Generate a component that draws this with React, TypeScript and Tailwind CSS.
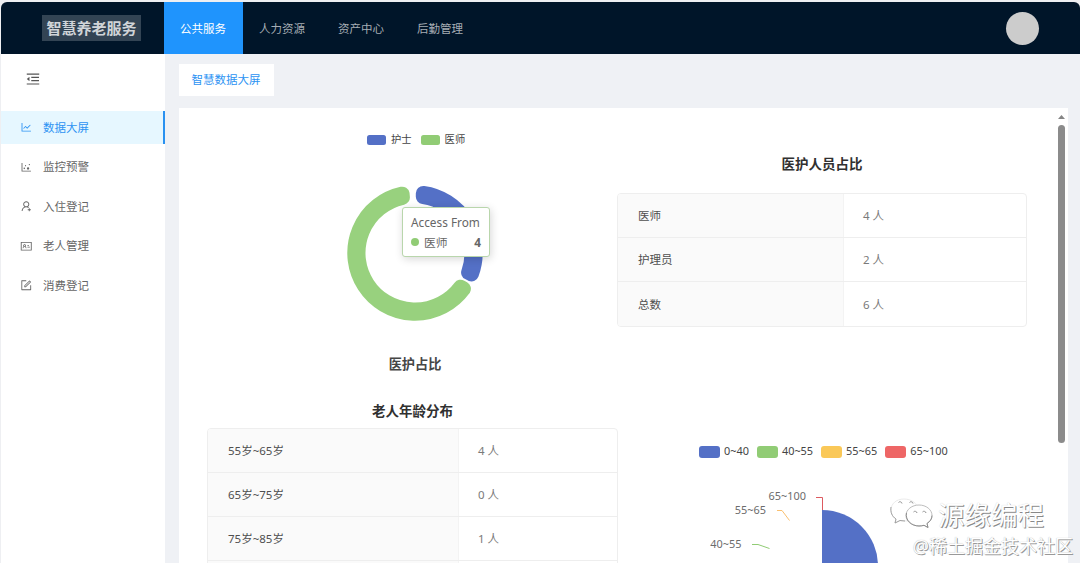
import React from 'react';
import {
  AiOutlineMenuFold,
  AiOutlineLineChart,
  AiOutlineDotChart,
  AiOutlineUserAdd,
  AiOutlineIdcard,
  AiOutlineForm,
} from 'react-icons/ai';

const navItems = ['公共服务', '人力资源', '资产中心', '后勤管理'];

const menuItems = [
  { label: '数据大屏', icon: AiOutlineLineChart },
  { label: '监控预警', icon: AiOutlineDotChart },
  { label: '入住登记', icon: AiOutlineUserAdd },
  { label: '老人管理', icon: AiOutlineIdcard },
  { label: '消费登记', icon: AiOutlineForm },
];

const staffRows = [
  ['医师', '4 人'],
  ['护理员', '2 人'],
  ['总数', '6 人'],
];

const ageRows = [
  ['55岁~65岁', '4 人'],
  ['65岁~75岁', '0 人'],
  ['75岁~85岁', '1 人'],
  ['', ''],
];

// ring segment inset by r, the round-joined stroke gives it back with rounded corners
const ringPath = (from: number, to: number, r = 7.5) => {
  const outer = 67.7 - r;
  const inner = 49.5 + r;
  const point = (radius: number, deg: number, side: number) => {
    const a = (deg * Math.PI) / 180 + side * Math.asin(r / radius);
    return `${(radius * Math.sin(a)).toFixed(2)} ${(-radius * Math.cos(a)).toFixed(2)}`;
  };
  const large = to - from > 190 ? 1 : 0;
  return `M${point(outer, from, 1)}A${outer} ${outer} 0 ${large} 1 ${point(outer, to, -1)}L${point(inner, to, -1)}A${inner} ${inner} 0 ${large} 0 ${point(inner, from, 1)}Z`;
};

const Header: React.FC = () => (
  <header className="flex h-[52px] shrink-0 items-stretch rounded-t-[6px] bg-[#001529]">
    <div className="flex w-[163px] shrink-0 items-center pl-[41px]">
      <div className="flex h-[26px] w-[99px] items-center justify-center bg-[#334454] text-[15px] font-bold text-[#d0d4d8]">
        智慧养老服务
      </div>
    </div>
    <nav className="flex text-[11.5px]">
      {navItems.map((item, i) => (
        <a
          key={item}
          className={`flex w-[79px] items-center justify-center pr-px pt-[2px] ${i === 0 ? 'bg-[#1f94fd] text-white' : 'text-[#a6adb4]'}`}
        >
          {item}
        </a>
      ))}
    </nav>
    <div className="ml-auto mr-[41px] flex items-center">
      <div className="h-[33px] w-[33px] rounded-full bg-[#ccc]" />
    </div>
  </header>
);

const Sidebar: React.FC = () => (
  <aside className="w-[164px] shrink-0 bg-white">
    <div className="flex h-[57px] items-center pb-[7px] pl-[24px] text-[#555]">
      <AiOutlineMenuFold size={16} />
    </div>
    <ul className="flex flex-col gap-[6.5px] text-[11.5px]">
      {menuItems.map(({ label, icon: Icon }, i) => (
        <li
          key={label}
          className={`flex h-[33px] items-center pl-[19px] ${i === 0 ? 'border-r-[2.5px] border-[#2a91f0] bg-[#e6f7ff] text-[#2d93f3]' : 'text-[#666]'}`}
        >
          <Icon size={12.5} />
          <span className="ml-[10.5px]">{label}</span>
        </li>
      ))}
    </ul>
  </aside>
);

const InfoTable: React.FC<{ rows: string[][]; labelWidth: string }> = ({ rows, labelWidth }) => (
  <div className="overflow-hidden rounded-[4px] border border-[#eeeeee] text-[11.5px]">
    {rows.map(([label, value], i) => (
      <div key={i} className="flex h-[44px] border-b border-[#eeeeee] last:border-b-0">
        <div className={`flex items-center border-r border-[#f3f3f3] bg-[#fafafa] pl-[20px] pt-px text-[#4f4f4f] ${labelWidth}`}>
          {label}
        </div>
        <div className="flex items-center pl-[19px] pt-px text-[#7a7a7a]">{value}</div>
      </div>
    ))}
  </div>
);

const StaffChart: React.FC = () => (
  <div className="relative h-[270px]">
    <div className="flex h-[16px] items-center pl-[160px] pt-[1px] text-[10.3px] text-[#444]">
      <span className="mr-[5px] h-[10px] w-[19px] rounded-[2.5px] bg-[#5470c6]" />
      护士
      <span className="ml-[9px] mr-[5px] h-[10px] w-[19px] rounded-[2.5px] bg-[#91cc75]" />
      医师
    </div>
    <svg className="ml-[136.500px] mt-[35px]" width="142" height="142" viewBox="-71 -71 142 142">
      <path d={ringPath(0.8, 117.5)} fill="#5470c6" stroke="#5470c6" strokeWidth="15" strokeLinejoin="round" />
      <path d={ringPath(119.3, 354.8)} fill="#98d17e" stroke="#98d17e" strokeWidth="15" strokeLinejoin="round" />
    </svg>
    <div className="mt-[30px] text-center text-[13.2px] font-bold leading-[20px] text-[#464646]">
      <span className="ml-[5px]">医护占比</span>
    </div>
    <div className="absolute left-[195px] top-[76px] h-[50px] w-[88px] rounded-[3px] border border-[#b9d6ac] bg-white px-[8px] pt-[5px] text-[11.8px] leading-[19.5px] text-[#666] shadow-[1px_2px_8px_rgba(0,0,0,0.16)]">
      <div className="whitespace-nowrap">Access From</div>
      <div className="flex items-center">
        <span className="mr-[5px] h-[8px] w-[8px] rounded-full bg-[#91cc75]" />
        医师
        <span className="ml-auto font-bold">4</span>
      </div>
    </div>
  </div>
);

const ageLegend = [
  { label: '0~40', color: 'bg-[#5470c6]' },
  { label: '40~55', color: 'bg-[#91cc75]' },
  { label: '55~65', color: 'bg-[#fac858]' },
  { label: '65~100', color: 'bg-[#ee6666]' },
];

const AgeChart: React.FC = () => (
  <div>
    <div className="flex h-[16px] items-center gap-[8px] pl-[82px] text-[10.9px] text-[#444]">
      {ageLegend.map(({ label, color }) => (
        <div key={label} className="flex items-center">
          <span className={`mr-[4px] mt-[1px] h-[12px] w-[21px] rounded-[3px] ${color}`} />
          {label}
        </div>
      ))}
    </div>
    <svg className="mt-[20px]" width="410" height="160" viewBox="0 0 410 160">
      <path d="M205 31A56 56 0 0 1 205 143Z" fill="#5470c6" />
      <path d="M205.500 31V18.500H199" fill="none" stroke="#dd5a60" />
      <path d="M160 31.500H165L172.500 41.500" fill="none" stroke="#fac070" />
      <path d="M135 65.500H141L152.500 69.500" fill="none" stroke="#91cc75" />
      <g fontSize="10.9" fill="#6c6c6c" textAnchor="end">
        <text x="189" y="21">65~100</text>
        <text x="149" y="34.500">55~65</text>
        <text x="124.500" y="69">40~55</text>
      </g>
    </svg>
  </div>
);

const Watermark: React.FC = () => (
  <div className="absolute bottom-[2px] right-[7px] flex flex-col items-end text-white">
    <div className="mr-[29px] flex items-center">
      <svg className="mr-[5px]" width="44" height="34" viewBox="0 0 44 34" fill="white" stroke="#b5b5b5" strokeWidth="0.9" strokeLinejoin="round">
        <path d="M15 1C7 1 2 6 2 12c0 4 2 7 5 9l-1 4 5-2.500c2 .5 3 .5 5 .5 8 0 13-5 13-11S23 1 15 1Z" stroke="#e8e8e8" />
        <path d="M2 9c-.8 5 1 9.500 5 12l-1 4 5-2.500 5 .5" fill="none" stroke="#999" />
        <path d="M30 7c-7 0-13 4.500-13 10.500S23 28 30 28c2 0 3-.2 5-.7l4 2.200-1-4c3-2 5-4.500 5-8C43 11.500 37 7 30 7Z" />
        <path d="M17.500 15c-1.500 7 5 13 12.500 13 2 0 3-.2 5-.7l4 2.200-1-4c3-2 5-4.500 5-8" fill="none" stroke="#888" />
        <path d="M9.500 4.500a2 2 0 0 1 3.500 1M20.500 4.500a2 2 0 0 1 3.500 1M24.500 14a2 2 0 0 1 3.500 1M33.500 14a2 2 0 0 1 3.500 1" fill="none" stroke="#888" />
      </svg>
      <span className="text-[26.5px] leading-[32px] [text-shadow:1px_1px_0.5px_#888,0_0_1px_#c8c8c8]">源缘编程</span>
    </div>
    <div className="text-[18px] leading-[29px] [text-shadow:1px_1px_0.5px_#999,0_0_1px_#aaa]">@稀土掘金技术社区</div>
  </div>
);

const App: React.FC = () => {
  return (
    <div className="relative flex h-[563px] w-[1080px] flex-col overflow-hidden bg-[#eeeff2] pl-px pt-[2px] font-['Noto_Sans','Noto_Sans_CJK_SC',sans-serif]">
      <Header />
      <div className="flex min-h-0 flex-1 bg-[#eff1f5]">
        <Sidebar />
        <main className="ml-[14px] mr-[12px] flex min-w-0 flex-1 flex-col pt-[10px]">
          <div className="flex h-[32px] w-[95px] shrink-0 items-center justify-center bg-white pr-px text-[11.5px] text-[#2d93f3]">
            智慧数据大屏
          </div>
          <div className="mt-[12px] flex min-h-0 flex-1 overflow-hidden bg-white">
            <div className="grid w-[850px] shrink-0 grid-cols-[411px_410px] content-start pl-[28px] pt-[23px]">
              <StaffChart />
              <div className="-ml-px pr-px pt-[23px]">
                <h3 className="mb-[18px] text-center text-[13.5px] font-bold leading-[21px] text-[#303030]">医护人员占比</h3>
                <InfoTable rows={staffRows} labelWidth="w-[226px]" />
              </div>
              <div>
                <h3 className="mb-[7px] text-center text-[13.5px] font-bold leading-[20px] text-[#303030]">老人年龄分布</h3>
                <InfoTable rows={ageRows} labelWidth="w-[251px]" />
              </div>
              <div className="-ml-px pt-[42px]">
                <AgeChart />
              </div>
            </div>
            <div className="ml-auto mr-[3px] flex w-[7px] flex-col items-center pt-[7px]">
              <svg width="7" height="4" viewBox="0 0 7 4">
                <path d="M3.500 0L7 4H0Z" fill="#858585" />
              </svg>
              <div className="mt-[6px] h-[318px] w-[7px] rounded-full bg-[#8b8b8b]" />
            </div>
          </div>
        </main>
      </div>
      <Watermark />
    </div>
  );
};

export default App;
